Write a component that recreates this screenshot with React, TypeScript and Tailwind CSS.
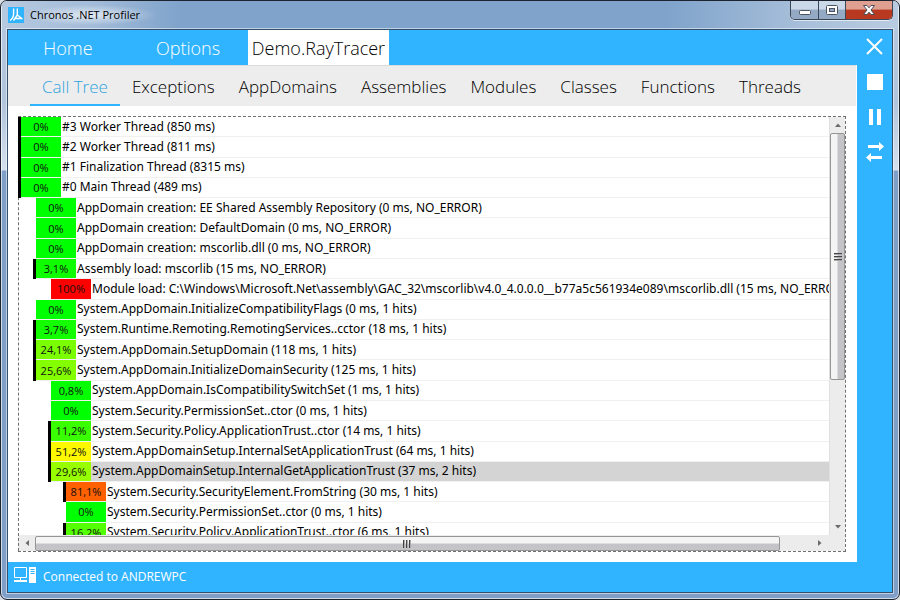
import React from "react";

type CallNode = { level: number; percent: number; label: string; expandable?: boolean; selected?: boolean };

const nodes: CallNode[] = [
  { level: 0, percent: 0, label: "#3 Worker Thread (850 ms)", expandable: true },
  { level: 0, percent: 0, label: "#2 Worker Thread (811 ms)", expandable: true },
  { level: 0, percent: 0, label: "#1 Finalization Thread (8315 ms)", expandable: true },
  { level: 0, percent: 0, label: "#0 Main Thread (489 ms)", expandable: true },
  { level: 1, percent: 0, label: "AppDomain creation: EE Shared Assembly Repository (0 ms, NO_ERROR)" },
  { level: 1, percent: 0, label: "AppDomain creation: DefaultDomain (0 ms, NO_ERROR)" },
  { level: 1, percent: 0, label: "AppDomain creation: mscorlib.dll (0 ms, NO_ERROR)" },
  { level: 1, percent: 3.1, label: "Assembly load: mscorlib (15 ms, NO_ERROR)", expandable: true },
  { level: 2, percent: 100, label: "Module load: C:\\Windows\\Microsoft.Net\\assembly\\GAC_32\\mscorlib\\v4.0_4.0.0.0__b77a5c561934e089\\mscorlib.dll (15 ms, NO_ERROR)" },
  { level: 1, percent: 0, label: "System.AppDomain.InitializeCompatibilityFlags (0 ms, 1 hits)" },
  { level: 1, percent: 3.7, label: "System.Runtime.Remoting.RemotingServices..cctor (18 ms, 1 hits)", expandable: true },
  { level: 1, percent: 24.1, label: "System.AppDomain.SetupDomain (118 ms, 1 hits)", expandable: true },
  { level: 1, percent: 25.6, label: "System.AppDomain.InitializeDomainSecurity (125 ms, 1 hits)", expandable: true },
  { level: 2, percent: 0.8, label: "System.AppDomain.IsCompatibilitySwitchSet (1 ms, 1 hits)" },
  { level: 2, percent: 0, label: "System.Security.PermissionSet..ctor (0 ms, 1 hits)" },
  { level: 2, percent: 11.2, label: "System.Security.Policy.ApplicationTrust..ctor (14 ms, 1 hits)", expandable: true },
  { level: 2, percent: 51.2, label: "System.AppDomainSetup.InternalSetApplicationTrust (64 ms, 1 hits)", expandable: true },
  { level: 2, percent: 29.6, label: "System.AppDomainSetup.InternalGetApplicationTrust (37 ms, 2 hits)", expandable: true, selected: true },
  { level: 3, percent: 81.1, label: "System.Security.SecurityElement.FromString (30 ms, 1 hits)", expandable: true },
  { level: 3, percent: 0, label: "System.Security.PermissionSet..ctor (0 ms, 1 hits)" },
  { level: 3, percent: 16.2, label: "System.Security.Policy.ApplicationTrust..ctor (6 ms, 1 hits)", expandable: true },
];

const tabs = ["Call Tree", "Exceptions", "AppDomains", "Assemblies", "Modules", "Classes", "Functions", "Threads"];

/* Green at 0%, yellow at 50%, red at 100%. */
function heatColor(percent: number) {
  const r = Math.round(255 * Math.min(1, percent / 50));
  const g = Math.round(255 * Math.min(1, (100 - percent) / 50));
  return `rgb(${r}, ${g}, 0)`;
}

function TitleBar() {
  return (
    <header className="mx-px flex h-7 shrink-0 items-start justify-between bg-[linear-gradient(to_right,#b6c9df,#a3bcd9_10%,#7fa3cb_20%,#7fa3cb_74%,#a9c0da_90%,#b9cbe0)] pr-[5px] pl-1.5">
      <div className="flex h-7 items-center gap-0.5">
        <svg className="size-4" viewBox="0 0 16 16" aria-hidden="true">
          <rect width="16" height="16" fill="#30b4ff" />
          <path d="M5.600 1.500v5.500Q5.500 11 2 13.500M9.300 1.500v6.500L14.500 12M9.300 8 5.500 13.500M7.500 11.500h6.500" fill="none" stroke="#fff" strokeWidth="1.400" />
        </svg>
        <h1 className="bg-[radial-gradient(ellipse_at_center,rgba(255,255,255,0.65),transparent_72%)] pr-4 pl-1 text-[11px] leading-5 text-black">
          Chronos .NET Profiler
        </h1>
      </div>
      <div className="flex h-[19px] overflow-hidden rounded-b-[5px] border border-t-0 border-[#3b4757] shadow-[0_1px_0_rgba(255,255,255,0.6)]">
        <button type="button" aria-label="Minimize" className="flex w-7 items-end justify-center border-r border-[#3b4757] bg-linear-to-b from-[#cbd8e7] from-45% to-[#93a9c4] to-50% pb-1">
          <svg className="h-[5px] w-3" viewBox="0 0 12 5"><rect x=".5" y=".5" width="11" height="4" rx="1" fill="#fff" stroke="#4b5361" /></svg>
        </button>
        <button type="button" aria-label="Maximize" className="flex w-[27px] items-center justify-center border-r border-[#3b4757] bg-linear-to-b from-[#cbd8e7] from-45% to-[#93a9c4] to-50%">
          <svg className="h-[10px] w-3" viewBox="0 0 12 10"><rect x=".5" y=".5" width="11" height="9" rx="1" fill="#fff" stroke="#4b5361" /><rect x="3.500" y="3.500" width="5" height="3" fill="#93a9c4" stroke="#4b5361" /></svg>
        </button>
        <button type="button" aria-label="Close" className="flex w-[46px] items-center justify-center bg-linear-to-b from-[#dfa091] from-45% to-[#b8391f] to-50%">
          <svg className="h-[10px] w-3" viewBox="0 0 12 10"><path d="M.5.5h3.500L6 2.800 8 .5h3.500L8 5l3.500 4.500H8L6 7.200 4 9.500H.5L4 5z" fill="#fff" stroke="#4b4b5b" /></svg>
        </button>
      </div>
    </header>
  );
}

function MainTabs() {
  return (
    <nav aria-label="Main" className="flex h-[35px] shrink-0 text-[18px] leading-6 font-light text-white">
      <button type="button" className="w-30">Home</button>
      <button type="button" className="w-30">Options</button>
      <button type="button" className="w-[141px] bg-white text-black">Demo.RayTracer</button>
    </nav>
  );
}

function ViewTabs() {
  return (
    <nav aria-label="Views" className="mr-px flex h-[41px] shrink-0 border-t border-[#dcdcdc] bg-[#ededed] pl-[22px] text-[17px] leading-6 font-light text-black">
      {tabs.map((tab, i) => (
        <button
          type="button"
          key={tab}
          className={i === 0 ? "border-b-2 border-[#30b4ff] px-3 pt-1 text-[#30a4e0]" : "border-b-2 border-transparent px-3 pt-1"}
        >
          {tab}
        </button>
      ))}
    </nav>
  );
}

function TreeRow({ node }: { node: CallNode }) {
  return (
    <li className="flex min-h-0 flex-1" style={{ paddingLeft: node.level * 15 }}>
      <span className={node.expandable ? "w-[3px] shrink-0 bg-black" : "w-[3px] shrink-0"} />
      <span
        className="flex w-10 shrink-0 items-center justify-center border-b border-[#f0f0f0] text-[11px] leading-none text-[#111]"
        style={{ backgroundColor: heatColor(node.percent) }}
      >
        {String(node.percent).replace(".", ",")}%
      </span>
      <span
        className={
          node.selected
            ? "flex grow items-center border-b border-[#f0f0f0] bg-[#d4d4d4] pl-px font-['Noto_Sans',sans-serif] text-[12px] leading-none whitespace-nowrap"
            : "flex grow items-center border-b border-[#f0f0f0] pl-px font-['Noto_Sans',sans-serif] text-[12px] leading-none whitespace-nowrap"
        }
      >
        {node.label}
      </span>
    </li>
  );
}

function Arrow({ d }: { d: string }) {
  return (
    <svg className="size-2" viewBox="0 0 8 8" aria-hidden="true">
      <path d={d} fill="#6b6b6b" />
    </svg>
  );
}

function VerticalScrollbar() {
  return (
    <div className="flex w-4 shrink-0 flex-col border-l border-[#e0e0e0] bg-[#ececec]">
      <button type="button" aria-label="Scroll up" className="flex h-4 shrink-0 items-center justify-center"><Arrow d="M1 6 4 2.500 7 6z" /></button>
      <div className="min-h-0 grow">
        <div className="flex h-[64%] flex-col items-center justify-center gap-px rounded-xs border border-[#959595] bg-linear-to-r from-[#f4f4f4] from-45% to-[#c4c4c8] to-55%">
          <span className="h-0.5 w-2 border-t border-[#444] bg-[#aaa]" />
          <span className="h-0.5 w-2 border-t border-[#444] bg-[#aaa]" />
          <span className="h-0.5 w-2 border-t border-[#444] bg-[#aaa]" />
        </div>
      </div>
      <button type="button" aria-label="Scroll down" className="flex h-4 shrink-0 items-center justify-center"><Arrow d="M1 2 4 5.500 7 2z" /></button>
    </div>
  );
}

function HorizontalScrollbar() {
  return (
    <div className="flex h-4 shrink-0 bg-[#ececec] pr-4">
      <button type="button" aria-label="Scroll left" className="flex w-[17px] shrink-0 items-center justify-center"><Arrow d="M6 1 2.500 4 6 7z" /></button>
      <div className="flex min-w-0 grow pt-px">
        <div className="flex w-[96%] items-center justify-center gap-px rounded-xs border border-[#959595] bg-linear-to-b from-[#f4f4f4] from-45% to-[#c4c4c8] to-55%">
          <span className="h-2 w-0.5 border-l border-[#444] bg-[#aaa]" />
          <span className="h-2 w-0.5 border-l border-[#444] bg-[#aaa]" />
          <span className="h-2 w-0.5 border-l border-[#444] bg-[#aaa]" />
        </div>
      </div>
      <button type="button" aria-label="Scroll right" className="flex w-[18px] shrink-0 items-center justify-center"><Arrow d="M2 1 5.500 4 2 7z" /></button>
    </div>
  );
}

function CallTree() {
  return (
    <section aria-label="Call Tree" className="relative mt-[10px] mr-[11px] mb-[10px] ml-[10px] flex min-h-0 grow flex-col border border-l-0 border-dashed border-[#707070] before:absolute before:inset-y-0 before:left-0 before:border-l before:border-dashed before:border-[#707070]">
      <div className="flex min-h-0 grow">
        <div className="relative min-w-0 grow overflow-hidden">
          <ul className="flex h-[426px] flex-col">
            {nodes.map((node, i) => <TreeRow key={i} node={node} />)}
          </ul>
        </div>
        <VerticalScrollbar />
      </div>
      <HorizontalScrollbar />
    </section>
  );
}

function ActionBar() {
  return (
    <aside className="flex w-[35px] shrink-0 flex-col items-center gap-[11px] pt-[5px] text-white">
      <button type="button" aria-label="Close session"><svg className="size-6" viewBox="0 0 24 24"><path d="M4 4l15 15M19 4l-15 15" stroke="currentColor" strokeWidth="2" /></svg></button>
      <button type="button" aria-label="Stop"><svg className="size-6" viewBox="0 0 24 24"><path d="M4 4h16v16H4z" fill="currentColor" /></svg></button>
      <button type="button" aria-label="Pause"><svg className="size-6" viewBox="0 0 24 24"><path d="M6 4h4v16H6zM14 4h4v16h-4z" fill="currentColor" /></svg></button>
      <button type="button" aria-label="Swap"><svg className="size-6" viewBox="0 0 24 24"><path d="M5 5h11V2l5 4.500-5 4.500V8H5zM19 16H8v-3l-5 4.500L8 22v-3h11z" fill="currentColor" /></svg></button>
    </aside>
  );
}

function StatusBar() {
  return (
    <footer className="flex h-[30px] shrink-0 items-center gap-[7px] pl-1.5 text-[12px] leading-4 text-white">
      <svg className="-mt-1 h-4 w-[22px]" viewBox="0 0 22 16" aria-hidden="true">
        <path d="M.5.5h12v10H.5zM6.500 11v2" fill="none" stroke="#fff" />
        <path d="M0 13h13v2H0zM15 0h7v16h-7z" fill="#fff" />
        <path d="M16.500 2.500h4M16.500 4.500h4M16.500 6.500h4" stroke="#30b4ff" />
      </svg>
      Connected to ANDREWPC
    </footer>
  );
}

export default function App() {
  return (
    <div className="h-screen bg-[#d9dde2] font-['Open_Sans','Noto_Sans',sans-serif] text-black">
      <div className="flex h-full flex-col overflow-hidden rounded-[7px] border border-[#1d2430] bg-[linear-gradient(to_bottom,#b6c9df,#b0c4dc_100px,#d5e0ed_169px,#7f9fc9_170px)] pb-1.5 shadow-[inset_0_0_0_1px_rgba(255,255,255,0.65)]">
        <TitleBar />
        <main className="mx-1.5 flex min-h-0 grow flex-col border border-[#35506c] bg-[#30b4ff] shadow-[0_0_0_1px_rgba(255,255,255,0.5)]">
          <div className="flex min-h-0 grow">
            <div className="flex min-w-0 grow flex-col">
              <MainTabs />
              <div className="flex min-h-0 grow flex-col bg-white">
                <ViewTabs />
                <CallTree />
              </div>
            </div>
            <ActionBar />
          </div>
          <StatusBar />
        </main>
      </div>
    </div>
  );
}
